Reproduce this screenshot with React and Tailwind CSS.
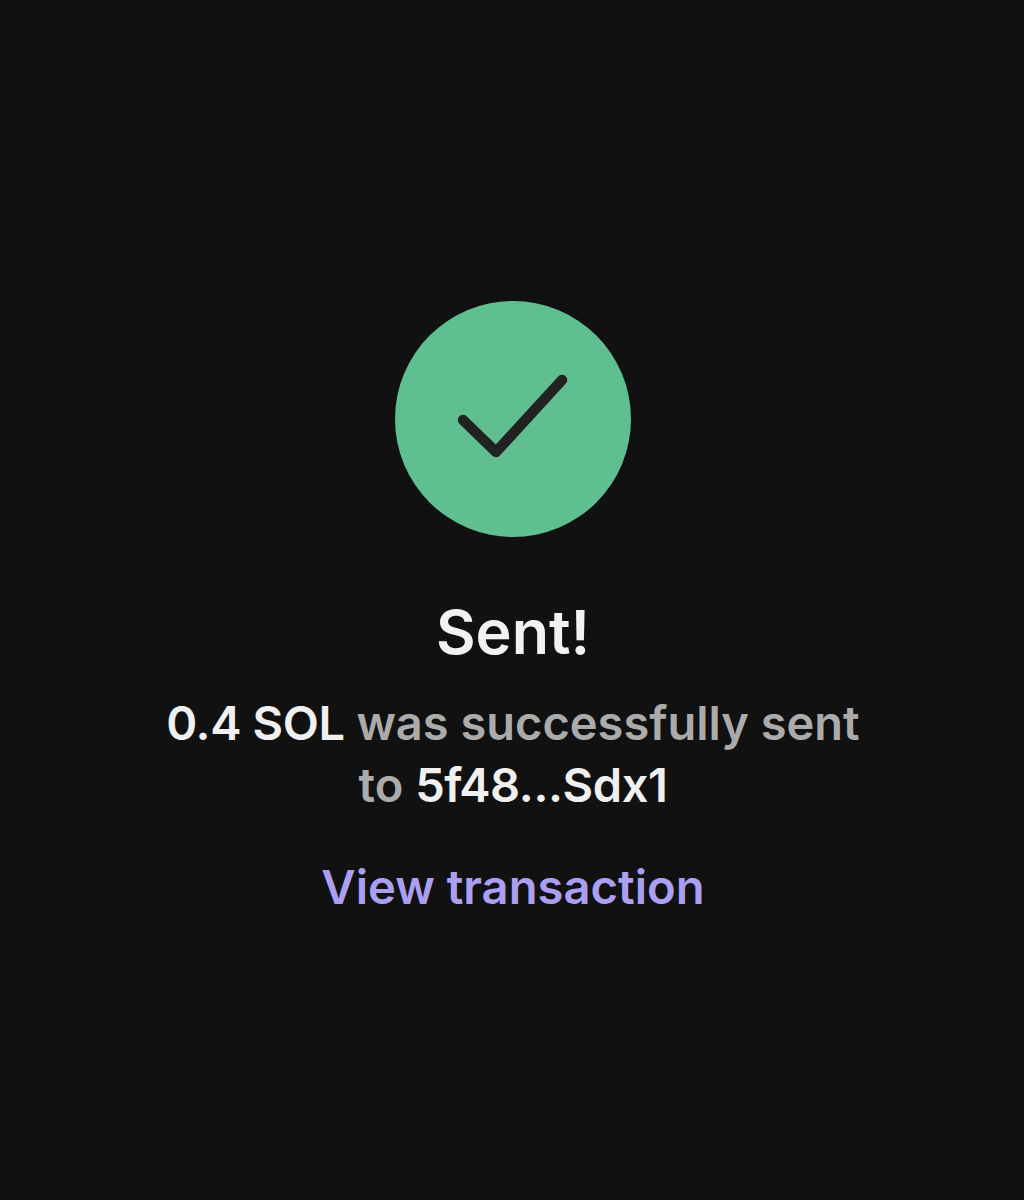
export default function App() {
  return (
    <div className="min-h-[1200px] bg-[#111111] flex flex-col items-center pt-[301px] font-['Inter',sans-serif]">
      <div className="ml-[2px] w-[236px] h-[236px] rounded-full bg-[#5fbf91] flex items-center justify-center">
        <svg width="236" height="236" viewBox="0 0 236 236" fill="none">
          <path d="M68 119L101 151L167 79" stroke="#222222" strokeWidth="10.5" strokeLinecap="round" strokeLinejoin="round" />
        </svg>
      </div>
      <h1 className="ml-[2px] mt-[58px] text-[61px] leading-[74px] font-semibold text-[#f2f2f2]">Sent!</h1>
      <p className="ml-[2px] mt-[23px] w-[720px] text-center text-[47px] leading-[62px] font-semibold text-[#ababab]">
        <span className="text-[#f0f0f0] tracking-[-0.4px]">0.4 SOL</span> was successfully sent to <span className="text-[#f0f0f0] tracking-[-0.4px]">5f48...Sdx1</span>
      </p>
      <a className="ml-[2px] mt-[42px] text-[47.2px] leading-[58px] font-semibold text-[#ab9ff2]">View transaction</a>
    </div>
  );
}
